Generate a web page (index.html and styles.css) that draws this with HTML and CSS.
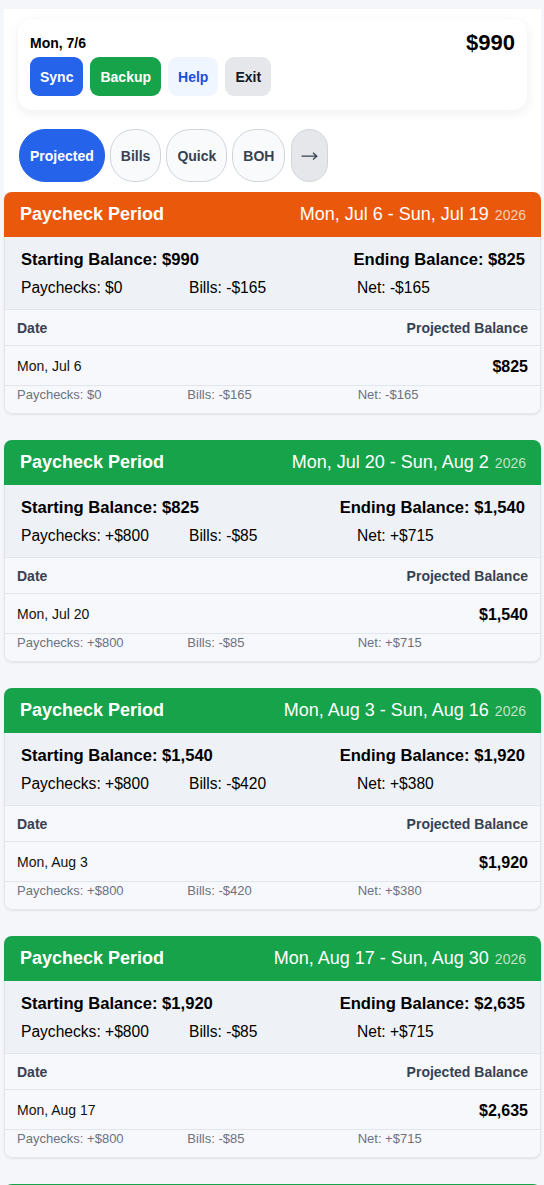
FILE: index.html
```html
<!DOCTYPE html>
<html lang="en">
<head>
<meta charset="utf-8">
<title>Paycheck Periods</title>
<link rel="stylesheet" href="styles.css">
</head>
<body>
<div class="wrap">
  <header class="top">
    <div class="status">
      <div class="status-left">
        <div class="today">Mon, 7/6</div>
        <div class="actions">
          <button class="btn btn-sync">Sync</button>
          <button class="btn btn-backup">Backup</button>
          <button class="btn btn-help">Help</button>
          <button class="btn btn-exit">Exit</button>
        </div>
      </div>
      <div class="balance">$990</div>
    </div>
    <nav class="tabs">
      <button class="tab tab-active">Projected</button>
      <button class="tab">Bills</button>
      <button class="tab">Quick</button>
      <button class="tab">BOH</button>
      <button class="tab tab-more" aria-label="More"><svg class="arrow" width="17" height="10" viewBox="0 0 17 10"><path d="M0.5 5.2H15.8M12 1.8L15.8 5.2L12 8.6" fill="none" stroke="#374151" stroke-width="1.3"/></svg></button>
    </nav>
  </header>

  <section class="period">
    <div class="period-head orange">
      <span class="period-title">Paycheck Period</span>
      <span class="period-range">Mon, Jul 6 - Sun, Jul 19 <span class="year">2026</span></span>
    </div>
    <div class="summary">
      <div class="summary-top"><span>Starting Balance: $990</span><span>Ending Balance: $825</span></div>
      <div class="cols summary-cols"><span>Paychecks: $0</span><span>Bills: -$165</span><span>Net: -$165</span></div>
    </div>
    <div class="thead"><span>Date</span><span>Projected Balance</span></div>
    <div class="trow"><span class="tdate">Mon, Jul 6</span><span class="tbal">$825</span></div>
    <div class="cols sub"><span>Paychecks: $0</span><span>Bills: -$165</span><span>Net: -$165</span></div>
  </section>

  <section class="period">
    <div class="period-head green">
      <span class="period-title">Paycheck Period</span>
      <span class="period-range">Mon, Jul 20 - Sun, Aug 2 <span class="year">2026</span></span>
    </div>
    <div class="summary">
      <div class="summary-top"><span>Starting Balance: $825</span><span>Ending Balance: $1,540</span></div>
      <div class="cols summary-cols"><span>Paychecks: +$800</span><span>Bills: -$85</span><span>Net: +$715</span></div>
    </div>
    <div class="thead"><span>Date</span><span>Projected Balance</span></div>
    <div class="trow"><span class="tdate">Mon, Jul 20</span><span class="tbal">$1,540</span></div>
    <div class="cols sub"><span>Paychecks: +$800</span><span>Bills: -$85</span><span>Net: +$715</span></div>
  </section>

  <section class="period">
    <div class="period-head green">
      <span class="period-title">Paycheck Period</span>
      <span class="period-range">Mon, Aug 3 - Sun, Aug 16 <span class="year">2026</span></span>
    </div>
    <div class="summary">
      <div class="summary-top"><span>Starting Balance: $1,540</span><span>Ending Balance: $1,920</span></div>
      <div class="cols summary-cols"><span>Paychecks: +$800</span><span>Bills: -$420</span><span>Net: +$380</span></div>
    </div>
    <div class="thead"><span>Date</span><span>Projected Balance</span></div>
    <div class="trow"><span class="tdate">Mon, Aug 3</span><span class="tbal">$1,920</span></div>
    <div class="cols sub"><span>Paychecks: +$800</span><span>Bills: -$420</span><span>Net: +$380</span></div>
  </section>

  <section class="period">
    <div class="period-head green">
      <span class="period-title">Paycheck Period</span>
      <span class="period-range">Mon, Aug 17 - Sun, Aug 30 <span class="year">2026</span></span>
    </div>
    <div class="summary">
      <div class="summary-top"><span>Starting Balance: $1,920</span><span>Ending Balance: $2,635</span></div>
      <div class="cols summary-cols"><span>Paychecks: +$800</span><span>Bills: -$85</span><span>Net: +$715</span></div>
    </div>
    <div class="thead"><span>Date</span><span>Projected Balance</span></div>
    <div class="trow"><span class="tdate">Mon, Aug 17</span><span class="tbal">$2,635</span></div>
    <div class="cols sub"><span>Paychecks: +$800</span><span>Bills: -$85</span><span>Net: +$715</span></div>
  </section>

  <section class="period">
    <div class="period-head green">
      <span class="period-title">Paycheck Period</span>
      <span class="period-range">Mon, Aug 31 - Sun, Sep 13 <span class="year">2026</span></span>
    </div>
    <div class="summary">
      <div class="summary-top"><span>Starting Balance: $2,635</span><span>Ending Balance: $3,350</span></div>
      <div class="cols summary-cols"><span>Paychecks: +$800</span><span>Bills: -$85</span><span>Net: +$715</span></div>
    </div>
    <div class="thead"><span>Date</span><span>Projected Balance</span></div>
    <div class="trow"><span class="tdate">Mon, Aug 31</span><span class="tbal">$3,350</span></div>
    <div class="cols sub"><span>Paychecks: +$800</span><span>Bills: -$85</span><span>Net: +$715</span></div>
  </section>
</div>
</body>
</html>
```

FILE: styles.css
```css
* { box-sizing: border-box; }

body {
  margin: 0;
  background: #f4f6fa;
  font-family: "Liberation Sans", Arial, sans-serif;
  color: #000;
}

.wrap {
  margin: 9px 3px 0 4px;
}

/* ---------- top panel ---------- */
.top {
  background: #fff;
  padding: 10px 14px 10px;
}

.status {
  background: #fff;
  border-radius: 14px;
  box-shadow: 0 3px 12px rgba(15, 23, 42, 0.07);
  padding: 14px 12px 14px;
  display: flex;
  justify-content: space-between;
  align-items: flex-start;
}

.today {
  font-size: 14px;
  font-weight: 700;
  line-height: 20px;
}

.actions {
  display: flex;
  gap: 7px;
  margin-top: 4px;
}

.btn {
  height: 39px;
  padding: 0 10px;
  border: none;
  border-radius: 9px;
  font-family: "Liberation Sans", Arial, sans-serif;
  font-size: 14px;
  font-weight: 700;
  line-height: 16px;
}

.btn-sync { background: #2563eb; color: #fff; }
.btn-backup { background: #16a34a; color: #fff; }
.btn-help { background: #eff6ff; color: #1d4ed8; }
.btn-exit { background: #e5e7eb; color: #111827; }

.balance {
  font-size: 22px;
  font-weight: 700;
  line-height: 20px;
}

.tabs {
  display: flex;
  gap: 5px;
  margin-top: 19px;
  padding-left: 1px;
}

.tab {
  height: 53px;
  padding: 0 10px;
  border: 1px solid #d1d5db;
  border-radius: 24px;
  background: #f8fafc;
  color: #374151;
  font-family: "Liberation Sans", Arial, sans-serif;
  font-size: 14px;
  font-weight: 700;
}

.tab-active {
  background: #2563eb;
  border-color: #2563eb;
  color: #fff;
  border-radius: 26px;
}

.tab-more {
  background: #e5e7eb;
  padding: 0 9px;
  display: flex;
  align-items: center;
  margin-left: 1px;
}

.arrow {
  display: block;
}

/* ---------- period cards ---------- */
.period {
  background: #f7f8fb;
  border-radius: 8px;
  overflow: hidden;
  box-shadow: inset 0 0 0 1px #e2e6ec, 0 1px 2px rgba(15, 23, 42, 0.08);
  margin-bottom: 26px;
}

.period-head {
  height: 45px;
  padding: 0 15px 0 16px;
  display: flex;
  justify-content: space-between;
  align-items: center;
  color: #fff;
}

.orange { background: #ea580c; }
.green { background: #16a34a; }

.period-title {
  font-size: 18px;
  font-weight: 700;
}

.period-range {
  font-size: 18px;
}

.year {
  font-size: 14px;
  color: rgba(255, 255, 255, 0.72);
  margin-left: 1px;
}

.summary {
  height: 72px;
  background: #eef2f7;
  padding: 13px 15px 0 16px;
  margin: 0 1px;
}

.summary-top {
  display: flex;
  justify-content: space-between;
  font-size: 16.6px;
  font-weight: 700;
  line-height: 20px;
}

.cols {
  display: grid;
  grid-template-columns: 1fr 1fr 1fr;
}

.summary-cols {
  margin-top: 8px;
  font-size: 15.6px;
  line-height: 19px;
}

.thead {
  height: 36px;
  border-top: 1px solid #e2e6ec;
  padding: 0 13px;
  display: flex;
  justify-content: space-between;
  align-items: center;
  font-size: 14px;
  font-weight: 700;
  color: #374151;
}

.trow {
  height: 40px;
  border-top: 1px solid #e2e6ec;
  padding: 0 13px;
  display: flex;
  justify-content: space-between;
  align-items: center;
}

.tdate {
  font-size: 14px;
  color: #111;
}

.tbal {
  font-size: 16px;
  font-weight: 700;
  margin-top: 3px;
}

.sub {
  border-top: 1px solid #e2e6ec;
  padding: 1px 13px 11px;
  font-size: 13px;
  line-height: 16px;
  color: #6b7280;
}
```
